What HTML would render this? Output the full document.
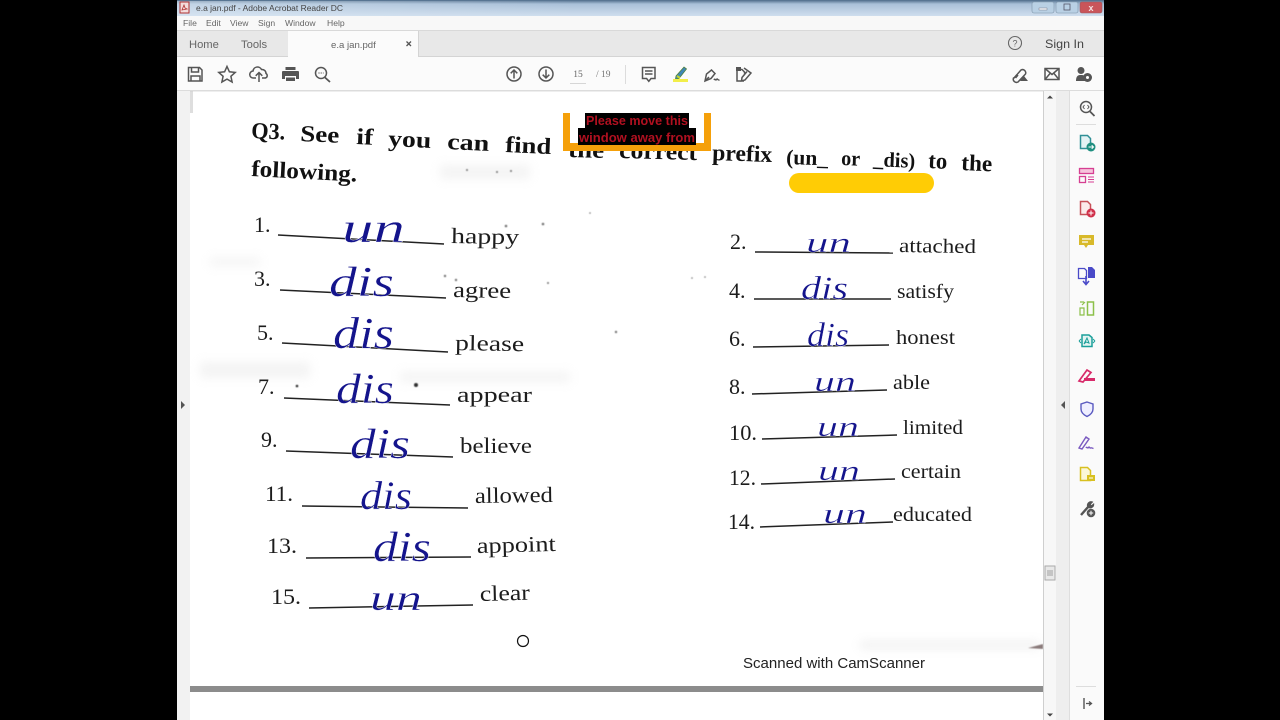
<!DOCTYPE html>
<html><head><meta charset="utf-8"><style>
html,body{margin:0;padding:0;background:#000;width:1280px;height:720px;overflow:hidden}
svg{display:block;position:absolute;left:0;top:0}
.ui{font-family:"Liberation Sans",sans-serif}
.p{font-family:"Liberation Serif",serif;fill:#1c1c1c;font-size:22px}
.b{font-family:"Liberation Serif",serif;font-weight:bold;fill:#111;font-size:23px}
.h{font-family:"Liberation Serif",serif;font-style:italic;fill:#14148c;stroke:#fff;stroke-width:.35px}
.ln{stroke:#222;stroke-width:1.5;fill:none}
.i{fill:none;stroke:#555;stroke-width:1.5}
</style></head><body>
<svg width="1280" height="720" viewBox="0 0 1280 720" xmlns="http://www.w3.org/2000/svg">
<defs>
<linearGradient id="tb" x1="0" y1="0" x2="0" y2="1"><stop offset="0" stop-color="#4d6a88"/><stop offset=".25" stop-color="#a9c0d8"/><stop offset="1" stop-color="#cfdeee"/></linearGradient>
<linearGradient id="tbh" x1="0" y1="0" x2="1" y2="0"><stop offset="0" stop-color="#dce8f3" stop-opacity=".5"/><stop offset="1" stop-color="#dce8f3" stop-opacity="0"/></linearGradient>
<filter id="bl"><feGaussianBlur stdDeviation="5"/></filter>
<filter id="b1"><feGaussianBlur stdDeviation=".5"/></filter>
</defs>
<rect x="177" y="0" width="927" height="720" fill="#fff"/>
<!-- title bar -->
<rect x="177" y="0" width="927" height="16" fill="url(#tb)"/>
<rect x="177" y="1" width="400" height="15" fill="url(#tbh)"/>
<rect x="180" y="2" width="9" height="11" fill="#f3dcdc" stroke="#b03030"/>
<path d="M182 10l2-5 1 3 2 1z" fill="none" stroke="#b03030" stroke-width=".8"/>
<text x="196" y="11" class="ui" font-size="8.6" fill="#444" textLength="147" lengthAdjust="spacingAndGlyphs">e.a jan.pdf - Adobe Acrobat Reader DC</text>
<rect x="1032" y="2" width="22" height="11" rx="2" fill="#b9d0e4" stroke="#7d93a8" stroke-width=".6"/>
<rect x="1039" y="8" width="8" height="2" fill="#f2f6fa" stroke="#667" stroke-width=".4"/>
<rect x="1056" y="2" width="22" height="11" rx="2" fill="#b9d0e4" stroke="#7d93a8" stroke-width=".6"/>
<rect x="1064" y="4" width="6" height="6" fill="none" stroke="#556" stroke-width=".8"/>
<rect x="1080" y="2" width="22" height="11" rx="2" fill="#c9555a" stroke="#9a5a60" stroke-width=".6"/>
<text x="1091" y="11" class="ui" font-size="9" font-weight="bold" fill="#f4e0e0" text-anchor="middle">x</text>
<!-- menu -->
<rect x="177" y="16" width="927" height="14" fill="#f8f8f8"/>
<rect x="177" y="30" width="927" height="1" fill="#d9d9d9"/>
<g class="ui" font-size="8.6" fill="#666">
<text x="183" y="26">File</text><text x="206" y="26">Edit</text><text x="230" y="26">View</text><text x="258" y="26">Sign</text><text x="285" y="26">Window</text><text x="327" y="26">Help</text>
</g>
<!-- tabs -->
<rect x="177" y="31" width="927" height="26" fill="#e8e8e8"/>
<rect x="177" y="56" width="927" height="1" fill="#d4d4d4"/>
<rect x="288" y="31" width="130" height="26" fill="#fbfbfb"/>
<rect x="418" y="31" width="1" height="26" fill="#d4d4d4"/>
<g class="ui" fill="#666">
<text x="189" y="48" font-size="11.2">Home</text><text x="241" y="48" font-size="11.2">Tools</text>
<text x="331" y="48" font-size="9.6" fill="#666">e.a jan.pdf</text>
<text x="1045" y="48" font-size="11.6" fill="#444" textLength="39" lengthAdjust="spacingAndGlyphs">Sign In</text>
</g>
<path d="M406.500 41.500l4.500 4.500m0-4.500l-4.500 4.500" stroke="#555" stroke-width="1.300"/>
<circle cx="1015" cy="43" r="6.500" fill="none" stroke="#666" stroke-width="1.100"/>
<text x="1015" y="46.500" class="ui" font-size="9" fill="#666" text-anchor="middle">?</text>
<!-- toolbar -->
<rect x="177" y="57" width="927" height="33" fill="#fbfbfb"/>
<rect x="177" y="90" width="927" height="1.500" fill="#dcdcdc"/>
<!-- save -->
<path class="i" d="M188.500 67.500h11l2.500 2.500v11h-13.500z M191.500 67.500v4.500h7v-4.500 M191 81v-5h9v5"/>
<!-- star -->
<path class="i" d="M227 66.500l2.400 5.300 5.800.6-4.300 3.900 1.200 5.700-5.100-2.900-5.100 2.900 1.200-5.700-4.300-3.900 5.800-.6z"/>
<!-- cloud -->
<path class="i" d="M256 78h-2.500a3.500 3.500 0 0 1-.5-7a4.500 4.500 0 0 1 8.500-1.500a4 4 0 0 1 4.500 4a2.500 2.500 0 0 1-.5 4.500h-3.500 M259 82v-9.500m-3.300 3.300l3.300-3.300 3.300 3.300"/>
<!-- print -->
<path d="M283 71h15a1 1 0 0 1 1 1v7h-3v-3h-11v3h-3v-7a1 1 0 0 1 1-1z M285.500 67h10v3h-10z M286 77.500h9v3.500h-9z" fill="#555"/>
<!-- search -->
<circle cx="321" cy="73" r="5.500" class="i"/><path d="M325 77.500l5 4.500" stroke="#555" stroke-width="1.800"/>
<path d="M318.500 73h5" stroke="#555" stroke-dasharray="1 1.200" stroke-width="1.200"/>
<!-- up/down -->
<circle cx="514" cy="74" r="7" class="i"/><path class="i" d="M514 78.500v-8.500m-3.300 3.300l3.300-3.300 3.300 3.300"/>
<circle cx="546" cy="74" r="7" class="i"/><path class="i" d="M546 69.500v8.500m-3.300-3.300l3.300 3.300 3.300-3.300"/>
<text x="578" y="77" font-family="Liberation Serif,serif" font-size="9.500" fill="#666" text-anchor="middle">15</text>
<rect x="570" y="83" width="16" height=".8" fill="#ccc"/>
<text x="596" y="77" font-family="Liberation Serif,serif" font-size="9.500" fill="#777">/ 19</text>
<rect x="625" y="65" width="1" height="19" fill="#dcdcdc"/>
<!-- comment -->
<path class="i" d="M642.500 67.500h12.500v11h-4l-2.200 2.800-2.200-2.800h-4.100z M645 71h7.500M645 74h7.500"/>
<!-- highlight -->
<path d="M676 76l8-9 2.500 2-7.500 9.500-3.500.5z" fill="#3f87b8" stroke="#4f7f3a" stroke-width=".8"/>
<rect x="673" y="79" width="15" height="3" fill="#f2ee4a"/>
<path d="M677 76l3 2" stroke="#c5d82a" stroke-width="2"/>
<!-- sign -->
<path class="i" d="M705 81l1.500-7 5-4 3.500 3.500-4 5zM705 81l4-4" stroke-width="1.300"/><path d="M714 80c1-2 1.500 1 2.500-.5s1 1 3 .5" class="i" stroke-width="1"/>
<!-- stamp -->
<path class="i" d="M737 69.500h5l2.500 2.500v1.500M737 69.500v11.500h7M744 68l7 5-6 7-3.500 1 .5-3.500 5-6" stroke-width="1.300"/><rect x="736" y="67" width="5" height="4" fill="#555"/>
<!-- link -->
<path class="i" d="M1014 78l7-8a3.200 3.200 0 0 1 4.500 4l-7.500 8a3.200 3.200 0 0 1-4.500-4z M1018 75l-2.500 3" stroke-width="1.200"/><path d="M1020 81l4-5 4 5z" fill="#555"/>
<!-- mail -->
<rect x="1045" y="68.500" width="14" height="11" class="i" stroke-width="1.100"/><path class="i" d="M1045 68.500l7 6 7-6M1045 79.500l5-6M1059 79.500l-5-6" stroke-width=".8"/>
<!-- person -->
<circle cx="1081" cy="70.500" r="3.500" fill="#555"/><path d="M1076 81c0-6 3-6 5-6s5 0 4.500 6z" fill="#555"/>
<circle cx="1087.500" cy="77.500" r="4.500" fill="#555"/><circle cx="1087.500" cy="77.500" r="1.500" fill="#fff"/>

<!-- doc side -->
<rect x="177" y="91" width="13" height="629" fill="#f2f2f2"/>
<rect x="190" y="91" width="3" height="22" fill="#c8c8c8" opacity=".6"/>
<path d="M181 401l4 4-4 4z" fill="#555"/>
<!-- page smudges -->
<g filter="url(#bl)" fill="#ccc" opacity=".22">
<rect x="200" y="362" width="110" height="16"/><rect x="400" y="372" width="170" height="10"/>
<rect x="440" y="165" width="90" height="14"/><rect x="860" y="642" width="180" height="6" fill="#aaa"/>
<rect x="210" y="258" width="50" height="8"/>
</g>
<g fill="#777" filter="url(#b1)">
<circle cx="467" cy="170" r="1"/><circle cx="497" cy="172" r="1"/><circle cx="511" cy="171" r="1"/><circle cx="506" cy="226" r="1.300"/><circle cx="543" cy="224" r="1.300"/>
<circle cx="590" cy="213" r=".8"/><circle cx="445" cy="276" r="1.200"/><circle cx="456" cy="280" r="1.200"/><circle cx="548" cy="283" r="1"/><circle cx="616" cy="332" r="1.200"/><circle cx="692" cy="278" r=".8"/><circle cx="705" cy="277" r=".8"/>
<circle cx="416" cy="385" r="2" fill="#333"/><circle cx="297" cy="386" r="1.300" fill="#333"/>
</g>
<path d="M1028 648l15-4v5z" fill="#8a7a7a" filter="url(#b1)"/>

<!-- heading -->
<g class="b">
<text transform="translate(251 138) rotate(2.600)" textLength="34" lengthAdjust="spacingAndGlyphs">Q3.</text>
<text transform="translate(300 141) rotate(2.600)" textLength="39" lengthAdjust="spacingAndGlyphs">See</text>
<text transform="translate(356 144) rotate(2.600)" textLength="17" lengthAdjust="spacingAndGlyphs">if</text>
<text transform="translate(388 146) rotate(2.600)" textLength="43" lengthAdjust="spacingAndGlyphs">you</text>
<text transform="translate(447 149) rotate(2.600)" textLength="42" lengthAdjust="spacingAndGlyphs">can</text>
<text transform="translate(505 152) rotate(2.600)" textLength="46" lengthAdjust="spacingAndGlyphs">find</text>
<text transform="translate(568 157) rotate(1.500)" textLength="36" lengthAdjust="spacingAndGlyphs">the</text>
<text transform="translate(619 158) rotate(1.500)" textLength="78" lengthAdjust="spacingAndGlyphs">correct</text>
<text transform="translate(712 160) rotate(2)" textLength="60" lengthAdjust="spacingAndGlyphs">prefix</text>
<text transform="translate(786 164) rotate(2)" font-size="21" textLength="42" lengthAdjust="spacingAndGlyphs">(un_</text>
<text transform="translate(841 165) rotate(2)" textLength="19" font-size="21" lengthAdjust="spacingAndGlyphs">or</text>
<text transform="translate(873 166) rotate(2.500)" font-size="21" textLength="42" lengthAdjust="spacingAndGlyphs">_dis)</text>
<text transform="translate(928 168) rotate(2.500)" textLength="19" lengthAdjust="spacingAndGlyphs">to</text>
<text transform="translate(961 170) rotate(2.500)" textLength="31" lengthAdjust="spacingAndGlyphs">the</text>
<text transform="translate(251 176) rotate(3)" textLength="106" lengthAdjust="spacingAndGlyphs">following.</text>
</g>
<!-- overlay -->
<path d="M563 113h7v30h134v-30h7v38h-148z" fill="#f5a00a"/>
<rect x="585" y="113" width="104" height="15" fill="#000"/>
<rect x="578" y="128" width="118" height="17" fill="#000"/>
<g class="ui" font-size="12.500" font-weight="bold" fill="#b01020" text-anchor="middle">
<text x="637" y="125" textLength="102" lengthAdjust="spacingAndGlyphs">Please move this</text>
<text x="637" y="142" textLength="116" lengthAdjust="spacingAndGlyphs">window away from</text>
</g>
<rect x="789" y="173" width="145" height="20" rx="10" fill="#ffcc05"/>

<!-- lines -->
<g class="ln">
<path d="M278 235L444 244"/><path d="M280 290L446 298"/><path d="M282 343L448 352"/><path d="M284 398L450 405"/><path d="M286 451L453 457"/><path d="M302 506L468 508"/><path d="M306 558L471 557"/><path d="M309 608L473 605"/>
<path d="M755 252L893 253"/><path d="M754 299L891 299"/><path d="M753 347L889 345"/><path d="M752 394L887 390"/><path d="M762 439L897 435"/><path d="M761 484L895 479"/><path d="M760 527L893 522"/>
</g>
<g class="p">
<text x="254" y="232">1.</text><text x="254" y="286">3.</text><text x="257" y="340">5.</text><text x="258" y="394">7.</text><text x="261" y="447">9.</text><text x="265" y="501" textLength="28" lengthAdjust="spacingAndGlyphs">11.</text><text x="267" y="553" textLength="30" lengthAdjust="spacingAndGlyphs">13.</text><text x="271" y="604" textLength="30" lengthAdjust="spacingAndGlyphs">15.</text>
<text x="730" y="249">2.</text><text x="729" y="298">4.</text><text x="729" y="346">6.</text><text x="729" y="394">8.</text><text x="729" y="440" textLength="28" lengthAdjust="spacingAndGlyphs">10.</text><text x="729" y="485" textLength="27" lengthAdjust="spacingAndGlyphs">12.</text><text x="728" y="529" textLength="27" lengthAdjust="spacingAndGlyphs">14.</text>
<text transform="translate(451 243) rotate(1)" textLength="68" lengthAdjust="spacingAndGlyphs">happy</text>
<text transform="translate(453 297) rotate(1)" textLength="58" lengthAdjust="spacingAndGlyphs">agree</text>
<text transform="translate(455 350) rotate(1)" textLength="69" lengthAdjust="spacingAndGlyphs">please</text>
<text transform="translate(457 402)" textLength="75" lengthAdjust="spacingAndGlyphs">appear</text>
<text transform="translate(460 453)" textLength="72" lengthAdjust="spacingAndGlyphs">believe</text>
<text transform="translate(475 503) rotate(-.8)" textLength="78" lengthAdjust="spacingAndGlyphs">allowed</text>
<text transform="translate(477 553) rotate(-1.500)" textLength="79" lengthAdjust="spacingAndGlyphs">appoint</text>
<text transform="translate(480 601) rotate(-1.500)" textLength="50" lengthAdjust="spacingAndGlyphs">clear</text>
<g font-size="20">
<text transform="translate(899 252) rotate(.8)" textLength="77" lengthAdjust="spacingAndGlyphs">attached</text>
<text transform="translate(897 298)" textLength="57" lengthAdjust="spacingAndGlyphs">satisfy</text>
<text transform="translate(896 344)" textLength="59" lengthAdjust="spacingAndGlyphs">honest</text>
<text transform="translate(893 389)" textLength="37" lengthAdjust="spacingAndGlyphs">able</text>
<text transform="translate(903 434)" textLength="60" lengthAdjust="spacingAndGlyphs">limited</text>
<text transform="translate(901 478)" textLength="60" lengthAdjust="spacingAndGlyphs">certain</text>
<text transform="translate(893 521)" textLength="79" lengthAdjust="spacingAndGlyphs">educated</text>
</g>
</g>
<!-- handwriting -->
<g class="h">
<text x="342" y="242" font-size="42" textLength="63" lengthAdjust="spacingAndGlyphs">un</text>
<text x="329" y="296" font-size="42" textLength="65" lengthAdjust="spacingAndGlyphs">dis</text>
<text x="333" y="348" font-size="44" textLength="61" lengthAdjust="spacingAndGlyphs">dis</text>
<text x="336" y="403" font-size="42" textLength="58" lengthAdjust="spacingAndGlyphs">dis</text>
<text x="350" y="458" font-size="42" textLength="60" lengthAdjust="spacingAndGlyphs">dis</text>
<text x="360" y="509" font-size="40" textLength="52" lengthAdjust="spacingAndGlyphs">dis</text>
<text x="373" y="561" font-size="42" textLength="58" lengthAdjust="spacingAndGlyphs">dis</text>
<text x="370" y="610" font-size="36" textLength="52" lengthAdjust="spacingAndGlyphs">un</text>
<text x="806" y="252" font-size="29" textLength="45" lengthAdjust="spacingAndGlyphs">un</text>
<text x="801" y="299" font-size="33" textLength="47" lengthAdjust="spacingAndGlyphs">dis</text>
<text x="807" y="346" font-size="34" textLength="42" lengthAdjust="spacingAndGlyphs">dis</text>
<text x="814" y="391" font-size="28" textLength="42" lengthAdjust="spacingAndGlyphs">un</text>
<text x="817" y="436" font-size="28" textLength="42" lengthAdjust="spacingAndGlyphs">un</text>
<text x="818" y="480" font-size="28" textLength="42" lengthAdjust="spacingAndGlyphs">un</text>
<text x="823" y="523" font-size="28" textLength="44" lengthAdjust="spacingAndGlyphs">un</text>
</g>
<circle cx="523" cy="641" r="5.500" fill="#fff" stroke="#111" stroke-width="1.200"/>
<text x="743" y="668" class="ui" font-size="15" fill="#222" textLength="182" lengthAdjust="spacingAndGlyphs">Scanned with CamScanner</text>
<rect x="190" y="686" width="853" height="6" fill="#8c8c8c"/>

<!-- scrollbar -->
<rect x="1043" y="91" width="13" height="629" fill="#f7f7f7"/>
<rect x="1043" y="91" width="1" height="629" fill="#cfcfcf"/>
<rect x="1056" y="91" width="14" height="629" fill="#eeeeee"/>
<rect x="1069" y="91" width="1" height="629" fill="#dedede"/>
<path d="M1050 95.500l-3 3h6z" fill="#444"/>
<path d="M1050 716.500l-3-3h6z" fill="#444"/>
<rect x="1045" y="566" width="10" height="14" fill="#e8e8e8" stroke="#aaa"/>
<path d="M1047 571h6M1047 573h6M1047 575h6" stroke="#888" stroke-width=".8"/>
<path d="M1065 401l-4 4 4 4z" fill="#555"/>
<!-- right pane -->
<rect x="1070" y="91" width="34" height="629" fill="#fafafa"/>
<circle cx="1086" cy="107" r="5.500" class="i"/><path d="M1090 111.500l4.500 4.500" stroke="#555" stroke-width="1.800"/><path d="M1084.500 105l-1.500 2 1.500 2M1087.500 105l1.500 2-1.500 2" stroke="#555" fill="none"/>
<rect x="1076" y="124" width="20" height="1" fill="#ddd"/>
<!-- export -->
<path d="M1080.500 135.500h7l3 3v10h-10z" fill="#e4f2f4" stroke="#2f8f96" stroke-width="1.500"/><circle cx="1091" cy="147" r="4.500" fill="#1f8f80"/><path d="M1088.500 147h5m-1.800-1.800l1.800 1.800-1.800 1.800" stroke="#fff" fill="none"/>
<!-- organize -->
<rect x="1079.500" y="168.500" width="14" height="5" fill="#f6c4dc" stroke="#d63f92" stroke-width="1.300"/><rect x="1079.500" y="176.500" width="6" height="6" fill="none" stroke="#d63f92" stroke-width="1.300"/><path d="M1088 177h6M1088 179.500h6M1088 182h6" stroke="#d63f92"/>
<!-- create -->
<path d="M1080.500 201.500h7l3 3v10h-10z" fill="#fbeaea" stroke="#c65058" stroke-width="1.500"/><circle cx="1091" cy="213" r="4.500" fill="#d0304a"/><path d="M1088.500 213h5m-2.500-2.500v5" stroke="#fff"/>
<!-- comment -->
<path d="M1079 235h15v10h-6l-2 3-2-3h-5z" fill="#d8b92a"/><path d="M1082 239h9M1082 242h6" stroke="#fff" stroke-width="1.200"/>
<!-- combine -->
<path d="M1078.500 268.500h6l2 2v8h-8z" fill="none" stroke="#4a4ac8" stroke-width="1.300"/><path d="M1088 267h4l3 3v8h-7z" fill="#4a4ac8"/><path d="M1086 276v8m-3-3l3 3.500 3-3.500" stroke="#4a4ac8" fill="none" stroke-width="1.600"/>
<!-- compress -->
<rect x="1087.500" y="302" width="6" height="13" fill="none" stroke="#8cc04a" stroke-width="1.500"/><path d="M1080 302h4M1080 308h4v7h-4z M1085 302l-3 3" fill="none" stroke="#8cc04a" stroke-width="1.200"/>
<!-- optimize -->
<path d="M1082 335h7l3 2.500v9h-10z" fill="#e4f4f2" stroke="#1b9f9a" stroke-width="1.500"/><path d="M1079 341l2-2m-2 2l2 2M1095 341l-2-2m2 2l-2 2M1084 344l3-6 2 5-3-1z" fill="none" stroke="#1b9f9a"/>
<!-- edit red -->
<path d="M1079 381l8-11 4 2.500-8 9.500z" fill="none" stroke="#d82a6a" stroke-width="1.700"/><rect x="1084" y="378" width="11" height="3" fill="#d82a6a"/>
<!-- shield -->
<path d="M1087 402l6 2v5c0 4-3 6-6 7.500-3-1.500-6-3.500-6-7.500v-5z" fill="#eef" stroke="#5a5ac0" stroke-width="1.400"/>
<!-- sign -->
<path d="M1079 448l7-11 3 2-7 10zM1086 448c1-2 1.500 1 2.500-.5s1 1 2 .5 1 0 3 .5" fill="none" stroke="#7a5ac0" stroke-width="1.400"/>
<!-- yellow doc -->
<path d="M1080.500 467.500h7l3 3v10h-10z" fill="#fbf7d8" stroke="#d8c020" stroke-width="1.500"/><rect x="1087" y="475" width="8" height="6" fill="#d8c020"/><path d="M1089 478h4" stroke="#fff"/>
<!-- tools -->
<path d="M1081 515l7.500-8.500" fill="none" stroke="#555" stroke-width="2.400"/><path d="M1088 507a3.500 3.500 0 0 1 4.500-5l-2.300 2.300 1.200 1.500 2.300-1.800a3.500 3.500 0 0 1-5 3.500z" fill="#555" stroke="#555"/><circle cx="1091" cy="513" r="4.300" fill="#555"/><path d="M1088.800 513h4.400m-2.200-2.200v4.400" stroke="#fff"/>
<rect x="1076" y="686" width="20" height="1" fill="#ddd"/>
<path d="M1084 698v11" stroke="#555" stroke-width="1.400"/><path d="M1086 703.500h5m-2-2l2.500 2-2.500 2" stroke="#555" fill="none" stroke-width="1.300"/>
</svg>
</body></html>
